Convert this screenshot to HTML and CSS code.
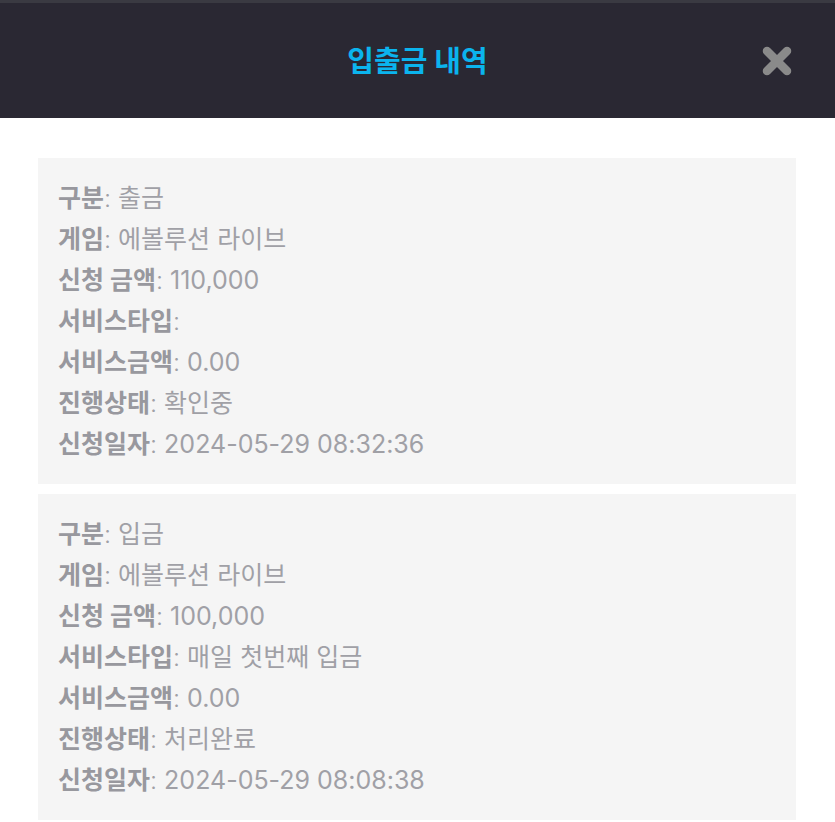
FILE: index.html
```html
<!DOCTYPE html>
<html lang="ko">
<head>
<meta charset="utf-8">
<link rel="stylesheet" href="styles.css">
</head>
<body>
<header class="topbar">
  <h1 class="title">입출금 내역</h1>
  <button class="close" aria-label="닫기">
    <svg viewBox="0 0 32 32" width="32" height="32"><path d="M6 6 L26 26 M26 6 L6 26" stroke="#8a8a8a" stroke-width="8.5" stroke-linecap="round"/></svg>
  </button>
</header>
<main class="list">
  <section class="card">
    <p class="row"><b>구분</b><span class="sep">:</span> 출금</p>
    <p class="row"><b>게임</b><span class="sep">:</span> 에볼루션 라이브</p>
    <p class="row"><b>신청 금액</b><span class="sep">:</span> 110,000</p>
    <p class="row"><b>서비스타입</b><span class="sep">:</span> </p>
    <p class="row"><b>서비스금액</b><span class="sep">:</span> 0.00</p>
    <p class="row"><b>진행상태</b><span class="sep">:</span> 확인중</p>
    <p class="row"><b>신청일자</b><span class="sep">:</span> 2024-05-29 08:32:36</p>
  </section>
  <section class="card">
    <p class="row"><b>구분</b><span class="sep">:</span> 입금</p>
    <p class="row"><b>게임</b><span class="sep">:</span> 에볼루션 라이브</p>
    <p class="row"><b>신청 금액</b><span class="sep">:</span> 100,000</p>
    <p class="row"><b>서비스타입</b><span class="sep">:</span> 매일 첫번째 입금</p>
    <p class="row"><b>서비스금액</b><span class="sep">:</span> 0.00</p>
    <p class="row"><b>진행상태</b><span class="sep">:</span> 처리완료</p>
    <p class="row"><b>신청일자</b><span class="sep">:</span> 2024-05-29 08:08:38</p>
  </section>
</main>
</body>
</html>
```
FILE: styles.css
```css
html, body {
  margin: 0;
  padding: 0;
  background: #ffffff;
  font-family: Inter, "Noto Sans CJK KR", "Noto Sans", sans-serif;
}
.topbar {
  height: 115px;
  border-top: 3px solid #3a3a42;
  background: #2a2833;
  display: flex;
  align-items: center;
  justify-content: center;
  position: relative;
}
.title {
  margin: 0 0 3px;
  color: #0bb4ee;
  font-size: 29px;
  font-weight: 700;
}
.close {
  position: absolute;
  right: 42px;
  top: 42px;
  width: 32px;
  height: 32px;
  padding: 0;
  border: 0;
  background: none;
}
.close svg { display: block; }
.list {
  padding: 40px 39px 0 38px;
  display: flex;
  flex-direction: column;
  gap: 10px;
}
.card {
  background: #f5f5f5;
  padding: 20px 20px 19px;
}
.row {
  margin: 0;
  height: 41px;
  line-height: 41px;
  font-size: 25px;
  font-weight: 400;
  color: #a0a0a6;
  white-space: pre;
}
.row b {
  font-weight: 700;
  color: #98989e;
}
.sep { font-weight: 300; }
```
